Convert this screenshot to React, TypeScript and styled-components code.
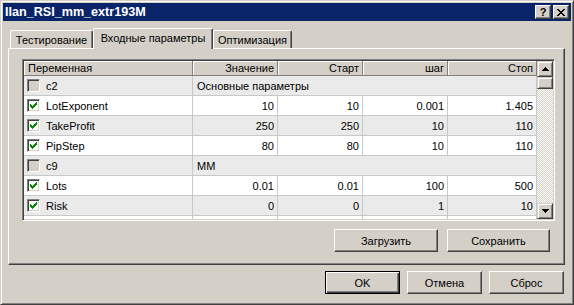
import styled, { createGlobalStyle, css } from "styled-components";

const Global = createGlobalStyle`
    body {
        margin: 0;
        background: #D4D0C8;
        font-family: "Liberation Sans", Arial, sans-serif;
        font-size: 11px;
        color: #000;
    }
`

const raised = css`
    background: #D4D0C8;
    border: 1px solid;
    border-color: #D4D0C8 #404040 #404040 #D4D0C8;
    box-shadow: inset 1px 1px #fff, inset -1px -1px #808080;
    box-sizing: border-box;
`

type Row =
    | { kind: "group"; name: string; label: string }
    | { kind: "param"; name: string; on: boolean; values: string[] }

const rows: Row[] = [
    { kind: "group", name: "c2", label: "Основные параметры" },
    { kind: "param", name: "LotExponent", on: true, values: ["10", "10", "0.001", "1.405"] },
    { kind: "param", name: "TakeProfit", on: true, values: ["250", "250", "10", "110"] },
    { kind: "param", name: "PipStep", on: true, values: ["80", "80", "10", "110"] },
    { kind: "group", name: "c9", label: "MM" },
    { kind: "param", name: "Lots", on: true, values: ["0.01", "0.01", "100", "500"] },
    { kind: "param", name: "Risk", on: true, values: ["0", "0", "1", "10"] },
    { kind: "param", name: "", on: false, values: ["", "", "", ""] },
]

const tabs = [
    { label: "Тестирование", width: 83 },
    { label: "Входные параметры", width: 120, active: true },
    { label: "Оптимизация", width: 79 },
]

const columns = "169px 85px 85px 85px 89px"

function CheckMark() {
    return (
        <svg width="7" height="7" viewBox="0 0 7 7" shapeRendering="crispEdges">
            <path fill="#008800" d="M0 2h1v3H0zM1 3h1v3H1zM2 4h1v3H2zM3 3h1v3H3zM4 2h1v3H4zM5 1h1v3H5zM6 0h1v3H6z" />
        </svg>
    )
}

function Arrow({ down }: { down?: boolean }) {
    return (
        <svg width="7" height="4" viewBox="0 0 7 4" shapeRendering="crispEdges">
            <path fill="#000" d={down ? "M0 0h7v1H0zM1 1h5v1H1zM2 2h3v1H2zM3 3h1v1H3z" : "M3 0h1v1H3zM2 1h3v1H2zM1 2h5v1H1zM0 3h7v1H0z"} />
        </svg>
    )
}

export default function App() {
    return (
        <>
            <Global />
            <Window>
                <TitleBar>
                    <span>Ilan_RSI_mm_extr193M</span>
                    <CaptionButtons>
                        <CaptionButton>?</CaptionButton>
                        <CaptionButton>
                            <svg width="8" height="7" viewBox="0 0 8 7" shapeRendering="crispEdges">
                                <path fill="#000" d="M0 0h2v1H0zM6 0h2v1H6zM1 1h2v1H1zM5 1h2v1H5zM2 2h4v1H2zM3 3h2v1H3zM2 4h4v1H2zM1 5h2v1H1zM5 5h2v1H5zM0 6h2v1H0zM6 6h2v1H6z" />
                            </svg>
                        </CaptionButton>
                    </CaptionButtons>
                </TitleBar>

                <Body>
                    <TabStrip>
                        {tabs.map((t) => (
                            <Tab key={t.label} $active={!!t.active} $w={t.width}>{t.label}</Tab>
                        ))}
                    </TabStrip>

                    <Panel>
                        <GridFrame>
                            <Table>
                                <HeaderRow>
                                    <HeadCell>Переменная</HeadCell>
                                    <HeadCell $right>Значение</HeadCell>
                                    <HeadCell $right>Старт</HeadCell>
                                    <HeadCell $right>шаг</HeadCell>
                                    <HeadCell $right>Стоп</HeadCell>
                                </HeaderRow>
                                {rows.map((r, i) => (
                                    <DataRow key={i} $alt={i % 2 === 0}>
                                        <NameCell>
                                            {r.name && (
                                                <CheckBox $on={r.kind === "param" && r.on}>
                                                    {r.kind === "param" && r.on && <CheckMark />}
                                                </CheckBox>
                                            )}
                                            {r.name}
                                        </NameCell>
                                        {r.kind === "group" ? (
                                            <GroupCell>{r.label}</GroupCell>
                                        ) : (
                                            r.values.map((v, j) => <ValueCell key={j}>{v}</ValueCell>)
                                        )}
                                    </DataRow>
                                ))}
                            </Table>
                            <ScrollBar>
                                <ScrollButton><Arrow /></ScrollButton>
                                <Thumb />
                                <Track />
                                <ScrollButton><Arrow down /></ScrollButton>
                            </ScrollBar>
                        </GridFrame>

                        <ButtonRow $pad={6} $gap={9}>
                            <PushButton $w={104}>Загрузить</PushButton>
                            <PushButton $w={103}>Сохранить</PushButton>
                        </ButtonRow>
                    </Panel>

                    <ButtonRow $pad={1} $gap={7}>
                        <PushButton $w={75} $default>OK</PushButton>
                        <PushButton $w={75}>Отмена</PushButton>
                        <PushButton $w={75}>Сброс</PushButton>
                    </ButtonRow>
                </Body>
            </Window>
        </>
    )
}

const Window = styled.div`
    width: 574px;
    height: 305px;
    box-sizing: border-box;
    display: flex;
    flex-direction: column;
    padding: 2px;
    background: #D4D0C8;
    border: 1px solid;
    border-color: #D4D0C8 #404040 #404040 #D4D0C8;
    box-shadow: inset 1px 1px #fff, inset -1px -1px #808080;
`

const TitleBar = styled.div`
    height: 18px;
    display: flex;
    align-items: center;
    justify-content: space-between;
    padding-left: 2px;
    background: #0A246A;
    color: #fff;
    font-weight: 700;
    font-size: 12.6px;
`

const CaptionButtons = styled.div`
    display: flex;
    gap: 2px;
    padding-right: 2px;
`

const CaptionButton = styled.div`
    ${raised}
    width: 16px;
    height: 14px;
    display: flex;
    align-items: center;
    justify-content: center;
    color: #000;
    font-size: 11px;
    font-weight: 700;
    border-color: #fff #404040 #404040 #fff;
    box-shadow: inset -1px -1px #808080;
`

const Body = styled.div`
    flex: 1;
    display: flex;
    flex-direction: column;
    padding: 8px 6px 0 5px;
`

const TabStrip = styled.div`
    height: 20px;
    display: flex;
    align-items: flex-end;
    padding-left: 2px;
    margin-bottom: -1px;
    position: relative;
    z-index: 1;
`

const Tab = styled.div<{ $active: boolean; $w: number }>`
    width: ${(p) => p.$w}px;
    height: ${(p) => (p.$active ? 21 : 18)}px;
    box-sizing: border-box;
    display: flex;
    align-items: ${(p) => (p.$active ? "flex-start" : "center")};
    justify-content: center;
    padding-top: ${(p) => (p.$active ? 3 : 1)}px;
    background: #D4D0C8;
    border-top: 1px solid #fff;
    border-left: 1px solid #fff;
    border-right: 1px solid #404040;
    border-radius: 2px 2px 0 0;
    box-shadow: inset -1px 0 #808080;
    z-index: ${(p) => (p.$active ? 2 : 1)};
    margin-bottom: ${(p) => (p.$active ? 0 : 1)}px;
    white-space: nowrap;
`

const Panel = styled.div`
    height: 217px;
    box-sizing: border-box;
    padding: 10px 8px 0 13px;
    border: 1px solid;
    border-color: #fff #404040 #404040 #fff;
    box-shadow: inset -1px -1px #808080;
`

const GridFrame = styled.div`
    width: 533px;
    height: 162px;
    box-sizing: border-box;
    display: flex;
    border: 1px solid;
    border-color: #808080 #fff #fff #808080;
    box-shadow: inset 1px 1px #404040, inset -1px -1px #D4D0C8;
    padding: 1px;
`

const Table = styled.div`
    flex: 1;
    overflow: hidden;
    background: #fff;
`

const HeaderRow = styled.div`
    display: grid;
    grid-template-columns: ${columns};
    height: 15px;
`

const HeadCell = styled.div<{ $right?: boolean }>`
    display: flex;
    align-items: center;
    justify-content: ${(p) => (p.$right ? "flex-end" : "flex-start")};
    padding: 0 3px 0 4px;
    background: #D4D0C8;
    border-right: 1px solid #808080;
    border-bottom: 1px solid #808080;
    box-shadow: inset 1px 1px #fff;
`

const DataRow = styled.div<{ $alt: boolean }>`
    display: grid;
    grid-template-columns: ${columns};
    height: 20px;
    background: ${(p) => (p.$alt ? "#EAEAEA" : "#fff")};

    & > div {
        border-right: 1px solid #C8C8C8;
        border-bottom: 1px solid #C8C8C8;
    }
`

const NameCell = styled.div`
    display: flex;
    align-items: center;
    gap: 6px;
    padding-left: 3px;
`

const ValueCell = styled.div`
    display: flex;
    align-items: center;
    justify-content: flex-end;
    padding-right: 3px;
`

const GroupCell = styled.div`
    grid-column: 2 / -1;
    display: flex;
    align-items: center;
    padding-left: 4px;
`

const CheckBox = styled.span<{ $on: boolean }>`
    width: 13px;
    height: 13px;
    box-sizing: border-box;
    display: flex;
    align-items: center;
    justify-content: center;
    background: ${(p) => (p.$on ? "#fff" : "#D4D0C8")};
    border: 1px solid;
    border-color: #808080 #fff #fff #808080;
    box-shadow: inset 1px 1px #404040, inset -1px -1px #D4D0C8;
`

const ScrollBar = styled.div`
    width: 16px;
    display: flex;
    flex-direction: column;
    background: repeating-conic-gradient(#D4D0C8 0 25%, #fff 0 50%) 0 0 / 2px 2px;
`

const ScrollButton = styled.div`
    ${raised}
    height: 16px;
    display: flex;
    align-items: center;
    justify-content: center;
`

const Thumb = styled.div`
    ${raised}
    height: 12px;
`

const Track = styled.div`
    flex: 1;
`

const ButtonRow = styled.div<{ $pad: number; $gap: number }>`
    display: flex;
    justify-content: flex-end;
    gap: ${(p) => p.$gap}px;
    padding-right: ${(p) => p.$pad}px;
    margin-top: ${(p) => (p.$pad > 3 ? 8 : 6)}px;
`

const PushButton = styled.div<{ $w: number; $default?: boolean }>`
    width: ${(p) => p.$w}px;
    height: 23px;
    box-sizing: border-box;
    display: flex;
    align-items: center;
    justify-content: center;
    background: #D4D0C8;
    border: 1px solid;
    border-color: ${(p) => (p.$default ? "#000" : "#fff #404040 #404040 #fff")};
    box-shadow: ${(p) =>
        p.$default
            ? "inset 1px 1px #fff, inset -1px -1px #404040, inset -2px -2px #808080"
            : "inset -1px -1px #808080"};
`
